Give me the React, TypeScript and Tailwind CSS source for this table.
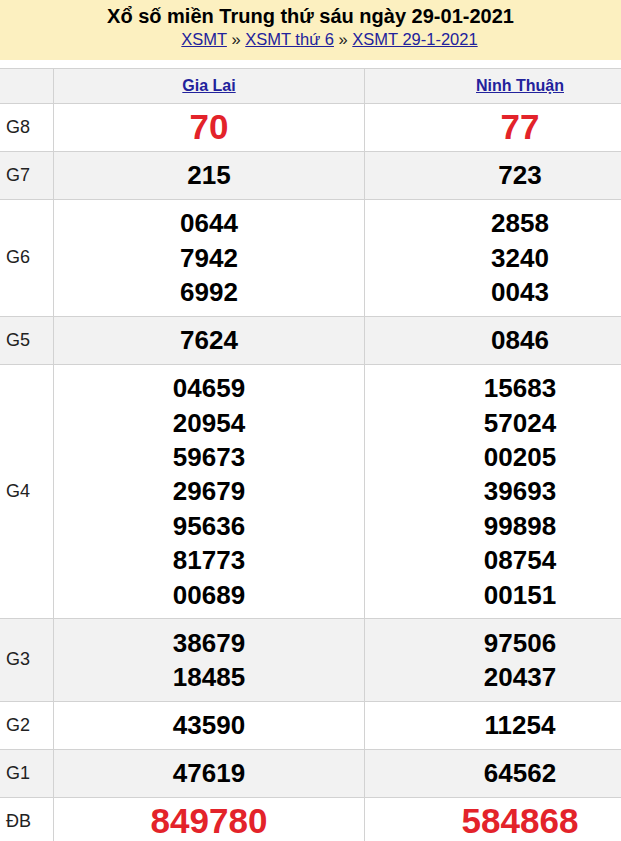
import React from "react";

type Row = { label: string; a: string[]; b: string[]; big?: boolean; gray?: boolean };

const rows: Row[] = [
  { label: "G8", a: ["70"], b: ["77"], big: true },
  { label: "G7", a: ["215"], b: ["723"], gray: true },
  { label: "G6", a: ["0644", "7942", "6992"], b: ["2858", "3240", "0043"] },
  { label: "G5", a: ["7624"], b: ["0846"], gray: true },
  {
    label: "G4",
    a: ["04659", "20954", "59673", "29679", "95636", "81773", "00689"],
    b: ["15683", "57024", "00205", "39693", "99898", "08754", "00151"],
  },
  { label: "G3", a: ["38679", "18485"], b: ["97506", "20437"], gray: true },
  { label: "G2", a: ["43590"], b: ["11254"] },
  { label: "G1", a: ["47619"], b: ["64562"], gray: true },
  { label: "ĐB", a: ["849780"], b: ["584868"], big: true },
];

function Cell({ nums, big }: { nums: string[]; big?: boolean }) {
  return (
    <div className="w-[311px] shrink-0 border-r border-[#d2d2d2] py-[6.3px] flex flex-col items-center">
      {nums.map((n, i) => (
        <div
          key={i}
          className={
            big
              ? "text-[35px] leading-[34.4px] font-bold text-[#e3232a]"
              : "text-[26px] leading-[34.4px] font-bold text-black"
          }
        >
          {n}
        </div>
      ))}
    </div>
  );
}

export default function App() {
  return (
    <div
      className="w-[621px] h-[841px] overflow-hidden bg-white"
      style={{ fontFamily: '"Liberation Sans", Arial, sans-serif' }}
    >
      <div className="bg-[#fcf0c0] h-[60px] flex flex-col items-center pt-[3px]">
        <div className="text-[20px] font-bold leading-[26px] text-black">
          Xổ số miền Trung thứ sáu ngày 29-01-2021
        </div>
        <div className="text-[16.5px] leading-[20px] text-[#222] pl-[38px]">
          <a className="text-[#22229c] underline">XSMT</a> »{" "}
          <a className="text-[#22229c] underline">XSMT thứ 6</a> »{" "}
          <a className="text-[#22229c] underline">XSMT 29-1-2021</a>
        </div>
      </div>
      <div className="h-[8px]" />
      <div className="w-[675px] border-t border-[#d2d2d2]">
        <div className="flex bg-[#f2f2f2] border-b border-[#d2d2d2] h-[35px]">
          <div className="w-[54px] shrink-0 border-r border-[#d2d2d2]" />
          <div className="w-[311px] shrink-0 border-r border-[#d2d2d2] flex items-center justify-center">
            <a className="text-[16px] font-bold text-[#22229c] underline">Gia Lai</a>
          </div>
          <div className="w-[311px] shrink-0 border-r border-[#d2d2d2] flex items-center justify-center">
            <a className="text-[16px] font-bold text-[#22229c] underline">Ninh Thuận</a>
          </div>
        </div>
        {rows.map((r) => (
          <div
            key={r.label}
            className={
              "flex border-b border-[#d2d2d2] " + (r.gray ? "bg-[#f2f2f2]" : "bg-white")
            }
          >
            <div className="w-[54px] shrink-0 border-r border-[#d2d2d2] flex items-center pl-[6px] text-[18px] text-[#222]">
              {r.label}
            </div>
            <Cell nums={r.a} big={r.big} />
            <Cell nums={r.b} big={r.big} />
          </div>
        ))}
      </div>
    </div>
  );
}
